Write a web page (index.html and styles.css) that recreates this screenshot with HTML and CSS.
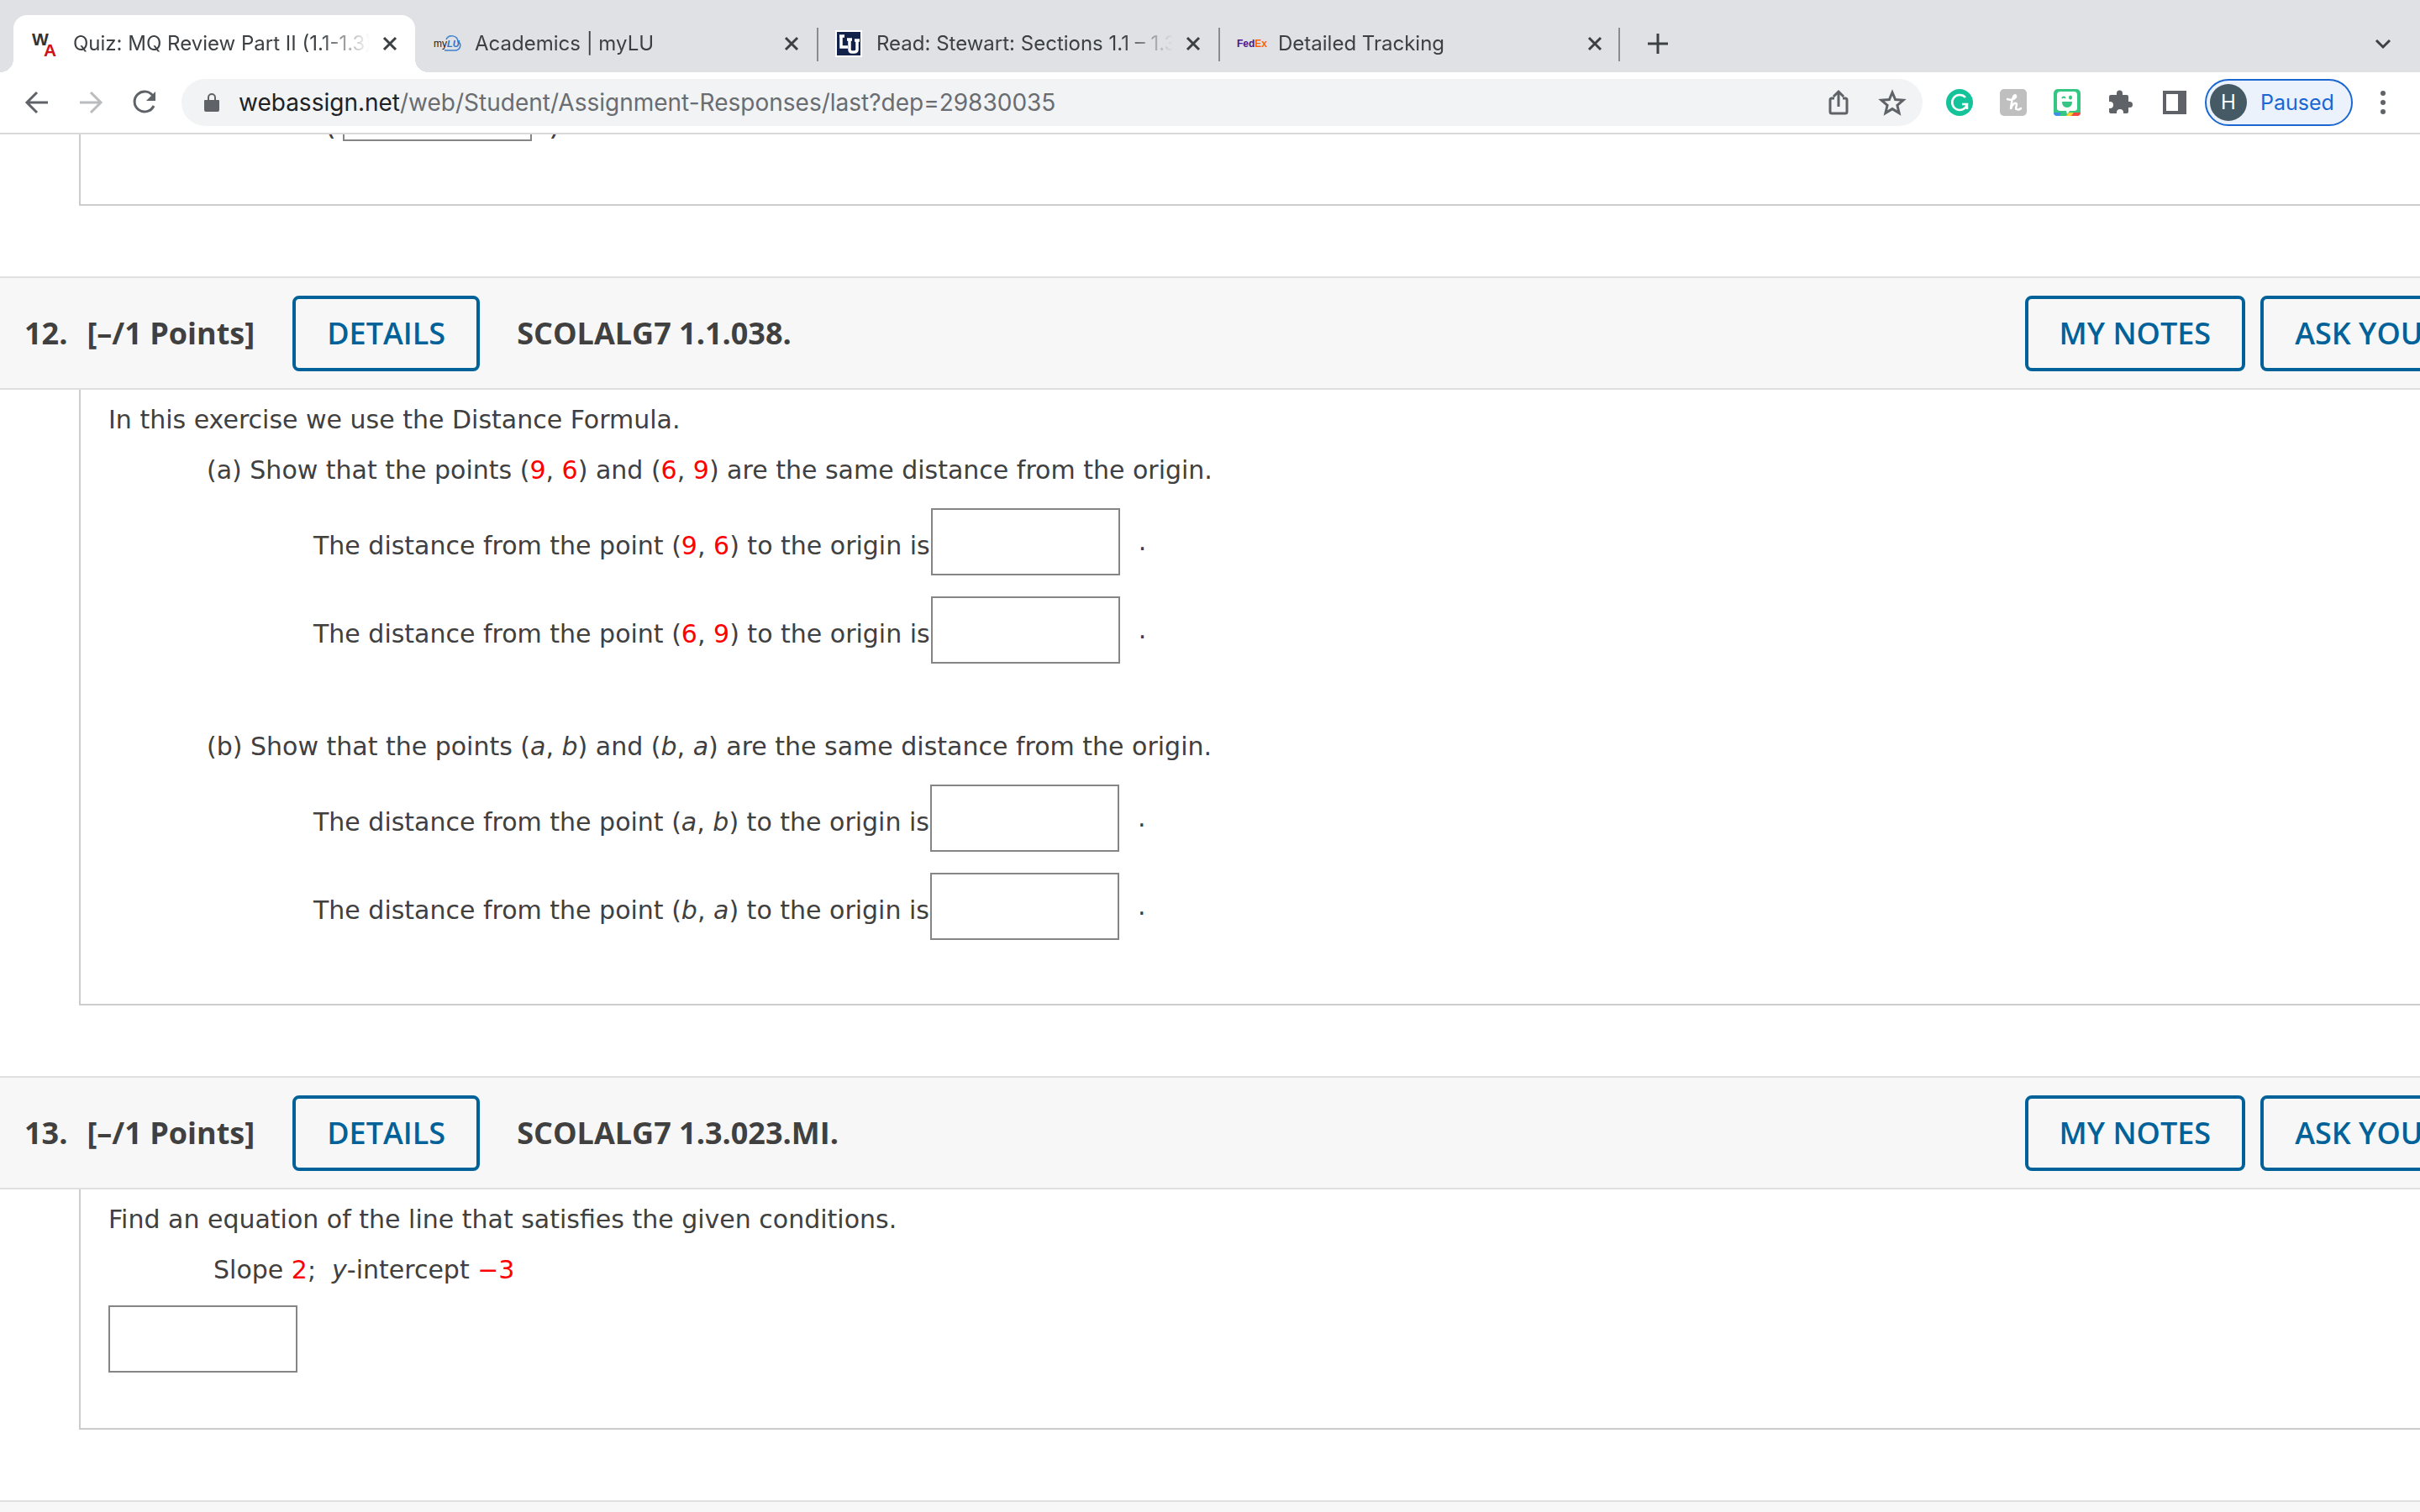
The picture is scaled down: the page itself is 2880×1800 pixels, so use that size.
FILE: index.html
```html
<!DOCTYPE html>
<html lang="en">
<head>
<meta charset="utf-8">
<title>Quiz: MQ Review Part II</title>
<link rel="stylesheet" href="styles.css">
</head>
<body>
<header class="browser">
  <nav class="tabs" aria-label="Open tabs">
    <div class="tab tab-active">
      <svg class="favicon" viewBox="0 0 32 32" aria-hidden="true"><text x="0" y="18" class="wa wa-w">W</text><text x="14" y="31" class="wa wa-a">A</text></svg>
      <span class="tab-title">Quiz: MQ Review Part II (1.1-1.3)</span>
      <button class="close" aria-label="Close tab"><svg viewBox="0 0 20 20"><path d="M3 3l14 14M17 3L3 17"/></svg></button>
    </div>
    <div class="tab">
      <svg class="favicon" viewBox="0 0 32 32" aria-hidden="true"><path d="M13 24h14c6-2 6-9 2-10 0-8-11-10-14-3" fill="none" stroke="#3f7fd0" stroke-width="1.5"/><text x="0" y="20" class="my">my</text><text x="16" y="20" class="my-lu">LU</text></svg>
      <span class="tab-title">Academics | myLU</span>
      <button class="close" aria-label="Close tab"><svg viewBox="0 0 20 20"><path d="M3 3l14 14M17 3L3 17"/></svg></button>
    </div>
    <div class="tab tab-ruled">
      <svg class="favicon" viewBox="0 0 32 32" aria-hidden="true"><path d="M0 0h32v32H0z" fill="#fff"/><path d="M2 2h28v28H2z" fill="#12224a"/><path d="M7 7v13h8M5 7h6M14 11h6M17 11v12q0 3 3 3h2q4 0 4-3V13M23 12h6" fill="none" stroke="#fff" stroke-width="3.5"/></svg>
      <span class="tab-title">Read: Stewart: Sections 1.1 – 1.3</span>
      <button class="close" aria-label="Close tab"><svg viewBox="0 0 20 20"><path d="M3 3l14 14M17 3L3 17"/></svg></button>
    </div>
    <div class="tab tab-ruled tab-last">
      <svg class="favicon" viewBox="0 0 32 32" aria-hidden="true"><text x="0" y="20" class="fedex">Fed<tspan fill="#ff6200">Ex</tspan></text></svg>
      <span class="tab-title">Detailed Tracking</span>
      <button class="close" aria-label="Close tab"><svg viewBox="0 0 20 20"><path d="M3 3l14 14M17 3L3 17"/></svg></button>
    </div>
    <button class="new-tab" aria-label="New tab"><svg viewBox="0 0 28 28"><path d="M14 2v24M2 14h24"/></svg></button>
    <button class="tab-search" aria-label="Search tabs"><svg viewBox="0 0 20 20"><path d="M2 6l8 8 8-8"/></svg></button>
  </nav>
  <div class="toolbar">
    <button class="nav-btn" aria-label="Back"><svg viewBox="0 0 32 32"><path d="M29 16H5M16 4L4 16l12 12"/></svg></button>
    <button class="nav-btn nav-off" aria-label="Forward"><svg viewBox="0 0 32 32"><path d="M3 16h24M16 4l12 12-12 12"/></svg></button>
    <button class="nav-btn" aria-label="Reload"><svg viewBox="0 0 32 32"><path d="M26.500 9A12 12 0 1 0 27 20"/><path d="M29 3v11H18z" fill="#5f6368" stroke="none"/></svg></button>
    <div class="omnibox">
      <svg class="lock" viewBox="0 0 20 24" aria-hidden="true"><path d="M2 9h16q1 0 1 1v11q0 2-2 2H3q-2 0-2-2V10q0-1 1-1z" fill="#5f6368"/><path d="M6 10V6a4 4 0 0 1 8 0v4" fill="none" stroke="#5f6368" stroke-width="2"/></svg>
      <a class="url" href="#q12"><span class="host">webassign.net</span>/web/Student/Assignment-Responses/last?dep=29830035</a>
      <button class="omni-btn" aria-label="Share"><svg viewBox="0 0 32 32"><path d="M11 11H8q-2 0-2 2v14q0 2 2 2h16q2 0 2-2V13q0-2-2-2h-3M16 21V4M10 9l6-6 6 6"/></svg></button>
      <button class="omni-btn" aria-label="Bookmark"><svg viewBox="0 0 32 32"><path d="M16 4l3.600 8.500 9.400.800-7.100 6.100 2.200 9.100-8.100-4.900-8.100 4.900 2.200-9.100L3 13.300l9.400-.800z"/></svg></button>
    </div>
    <div class="extensions">
      <button class="ext" aria-label="Grammarly"><svg viewBox="0 0 32 32"><circle cx="16" cy="16" r="16" fill="#15c39a"/><path d="M23 10a9 9 0 1 0 2 8h-6M25 18v6" fill="none" stroke="#fff" stroke-width="2.500"/></svg></button>
      <button class="ext" aria-label="Honey"><svg viewBox="0 0 32 32"><rect width="32" height="32" rx="5" fill="#bfbfbf"/><path d="M9 12c5 2 11-1 10-4-2-3-5 4-6 16 1-6 6-9 7-6 0 3-2 6 0 6 2 1 4 0 5-1" fill="none" stroke="#fff" stroke-width="2.500" stroke-linecap="round"/></svg></button>
      <button class="ext" aria-label="Bitmoji"><svg viewBox="0 0 32 32"><rect width="32" height="32" rx="5" fill="#35c684"/><path d="M0 28h9l-2 4H4q-4 0-4-4z" fill="#3f8fe8"/><path d="M18 28h6l-3 4h-6z" fill="#ffd22e"/><path d="M24 28h8q0 4-4 4h-7z" fill="#f4483d"/><path d="M8 3h16q4 0 4 4v16q0 3-4 3h-5l-3 4-1-4H8q-4 0-4-3V7q0-4 4-4z" fill="#fff"/><path d="M10 15h12q0 7-6 7t-6-7z" fill="#35c684"/><ellipse cx="20" cy="10" rx="2" ry="2.500" fill="#35c684"/><path d="M10 11q2-3 4 0" fill="none" stroke="#35c684" stroke-width="2"/></svg></button>
      <button class="ext" aria-label="Extensions"><svg viewBox="0 0 32 32"><path d="M4 7h7V5a3.500 3.500 0 0 1 7 0v2h5q2 0 2 2v6h1.500a3.500 3.500 0 0 1 0 7H25v5q0 2-2 2h-4v-1a4 4 0 0 0-8 0v1H4q-2 0-2-2v-4h1a4 4 0 0 0 0-8H2V9q0-2 2-2z" fill="#5f6368"/></svg></button>
      <button class="ext" aria-label="Side panel"><svg viewBox="0 0 32 32"><path d="M4 4h24v24H4z" fill="#fff" stroke="#5f6368" stroke-width="4"/><path d="M20 4h8v24h-8z" fill="#5f6368"/></svg></button>
    </div>
    <button class="profile"><span class="avatar">H</span>Paused</button>
    <button class="menu" aria-label="Menu"><svg viewBox="0 0 8 32"><circle cx="4" cy="5" r="3"/><circle cx="4" cy="16" r="3"/><circle cx="4" cy="27" r="3"/></svg></button>
  </div>
</header>

<main class="page">
  <section class="question-body body-scrolled">
    <div class="answer-row"><span class="big-paren">(</span><input class="answer" type="text" aria-label="Answer 11"><span class="big-paren">)</span></div>
  </section>

  <section class="question" id="q12">
    <header class="question-head">
      <span class="number">12.</span>
      <span class="points">[–/1 Points]</span>
      <button class="action">DETAILS</button>
      <h2 class="code">SCOLALG7 1.1.038.</h2>
      <button class="action">MY NOTES</button>
      <button class="action">ASK YOUR TEACHER</button>
    </header>
    <div class="question-body">
      <p class="line">In this exercise we use the Distance Formula.</p>
      <div class="part">
        <p class="line">(a) Show that the points (<b>9</b>, <b>6</b>) and (<b>6</b>, <b>9</b>) are the same distance from the origin.</p>
        <div class="answer-row"><label for="a1">The distance from the point (<b>9</b>, <b>6</b>) to the origin is</label><input class="answer" id="a1" type="text"><span class="stop">.</span></div>
        <div class="answer-row"><label for="a2">The distance from the point (<b>6</b>, <b>9</b>) to the origin is</label><input class="answer" id="a2" type="text"><span class="stop">.</span></div>
      </div>
      <div class="part">
        <p class="line">(b) Show that the points (<i>a</i>, <i>b</i>) and (<i>b</i>, <i>a</i>) are the same distance from the origin.</p>
        <div class="answer-row"><label for="b1">The distance from the point (<i>a</i>, <i>b</i>) to the origin is</label><input class="answer" id="b1" type="text"><span class="stop">.</span></div>
        <div class="answer-row"><label for="b2">The distance from the point (<i>b</i>, <i>a</i>) to the origin is</label><input class="answer" id="b2" type="text"><span class="stop">.</span></div>
      </div>
    </div>
  </section>

  <section class="question">
    <header class="question-head">
      <span class="number">13.</span>
      <span class="points">[–/1 Points]</span>
      <button class="action">DETAILS</button>
      <h2 class="code">SCOLALG7 1.3.023.MI.</h2>
      <button class="action">MY NOTES</button>
      <button class="action">ASK YOUR TEACHER</button>
    </header>
    <div class="question-body body-short">
      <p class="line">Find an equation of the line that satisfies the given conditions.</p>
      <p class="line given">Slope <b>2</b>;&nbsp; <i>y</i>-intercept <b>−3</b></p>
      <input class="answer" type="text" aria-label="Equation of the line">
    </div>
  </section>

  <section class="question">
    <header class="question-head"></header>
  </section>
</main>
</body>
</html>
```
FILE: styles.css
```css
* { box-sizing: border-box; }

html, body { height: 100%; }

body {
  margin: 0;
  display: flex;
  flex-direction: column;
  overflow: hidden;
  background: #fff;
  color: #404040;
  font: 30px/40px Verdana, "DejaVu Sans", sans-serif;
}

button {
  margin: 0;
  padding: 0;
  border: 0;
  background: none;
  font: inherit;
  color: inherit;
}

svg { display: block; overflow: visible; }
p, h2 { margin: 0; }

/* Browser window */
.browser {
  flex: none;
  font-family: Inter, sans-serif;
  border-bottom: 2px solid #dadada;
}

.tabs {
  display: flex;
  height: 86px;
  padding: 18px 34px 0 16px;
  background: #dfe1e5;
  color: #3c4043;
}

.tab {
  display: flex;
  align-items: center;
  width: 478px;
  padding: 0 20px 0 22px;
  font-size: 24px;
}

.tab-active {
  position: relative;
  border-radius: 16px 16px 0 0;
  background: #fff;
}

.tab-active::before,
.tab-active::after {
  content: "";
  position: absolute;
  bottom: 0;
  width: 16px;
  height: 16px;
}

.tab-active::before {
  right: 100%;
  background: radial-gradient(circle at 0 0, #dfe1e5 16px, #fff 16px);
}

.tab-active::after {
  left: 100%;
  background: radial-gradient(circle at 100% 0, #dfe1e5 16px, #fff 16px);
}

.tab-ruled {
  background: linear-gradient(#888c91, #888c91) left 0 top 15px / 2px 40px no-repeat;
}

.tab-last {
  background:
    linear-gradient(#888c91, #888c91) left 0 top 15px / 2px 40px no-repeat,
    linear-gradient(#888c91, #888c91) right 0 top 15px / 2px 40px no-repeat;
}

.favicon { flex: none; width: 32px; height: 32px; }
.wa { font: bold 21px "Liberation Sans", sans-serif; }
.wa-w { fill: #333; }
.wa-a { fill: #d01018; }
.my { font: 12px "Liberation Sans", sans-serif; fill: #222; }
.my-lu { font: italic bold 11px "Liberation Sans", sans-serif; fill: #2f6fc4; }
.fedex { font: bold 12px "Liberation Sans", sans-serif; fill: #4d148c; }

.tab-title {
  flex: 1;
  min-width: 0;
  margin: 0 14px 0 17px;
  overflow: hidden;
  white-space: nowrap;
  mask-image: linear-gradient(to right, #000 calc(100% - 60px), transparent);
}

.close, .new-tab, .tab-search {
  flex: none;
  fill: none;
  stroke: #3c4043;
  stroke-width: 3;
}

.close svg, .tab-search svg { width: 20px; height: 20px; }
.new-tab { margin-left: 31px; }
.new-tab svg { width: 28px; height: 28px; }
.tab-search { margin-left: auto; }

.toolbar {
  display: flex;
  align-items: center;
  height: 72px;
  padding: 0 40px 0 28px;
  background: #fff;
}

.nav-btn {
  margin-right: 32px;
  fill: none;
  stroke: #5f6368;
  stroke-width: 3;
}

.nav-btn:nth-child(3) { margin-right: 28px; }
.nav-btn svg { width: 32px; height: 32px; }
.nav-off { stroke: #babcbe; }

.omnibox {
  flex: 1;
  display: flex;
  align-items: center;
  height: 56px;
  margin-right: 28px;
  padding: 0 20px 0 26px;
  border-radius: 28px;
  background: #f1f3f4;
  font-size: 28px;
}

.lock { width: 20px; height: 24px; }

.url {
  flex: 1;
  margin-left: 22px;
  color: #696c70;
  text-decoration: none;
}

.host { color: #202124; }

.omni-btn {
  margin-left: 32px;
  fill: none;
  stroke: #5f6368;
  stroke-width: 3;
}

.omni-btn svg, .ext svg { width: 32px; height: 32px; }

.extensions { display: flex; gap: 32px; }

.profile {
  display: flex;
  align-items: center;
  gap: 16px;
  width: 176px;
  height: 56px;
  margin: 0 32px 0 20px;
  padding-left: 4px;
  border: 2px solid #1a67d2;
  border-radius: 28px;
  background: #ebf2fb;
  color: #1a67d2;
  font-size: 25px;
}

.avatar {
  width: 44px;
  height: 44px;
  border-radius: 50%;
  background: #455a64;
  color: #fff;
  font-size: 24px;
  line-height: 44px;
  text-align: center;
}

.menu { fill: #5f6368; }
.menu svg { width: 8px; height: 32px; }

/* Assignment */
.page {
  flex: 1;
  min-height: 0;
  overflow: hidden;
}

.question { margin-top: 84px; }

.question-head {
  display: flex;
  align-items: center;
  min-height: 135px;
  padding: 0 0 0 29px;
  border: 2px solid #e0e0e0;
  border-width: 2px 0;
  background: #f7f7f7;
  font: 36px/48px "Open Sans", sans-serif;
  font-weight: 700;
  white-space: nowrap;
}

.number { margin-right: 23px; }
.points { margin-right: 45px; }

.code {
  flex: 1;
  margin-left: 44px;
  font: inherit;
}

.action {
  flex: none;
  height: 90px;
  padding: 0 37px;
  border: 4px solid #006298;
  border-radius: 8px;
  color: #006298;
  font-weight: 600;
}

.action + .action { margin-left: 18px; }
.action:last-child { margin-right: -234px; }

.question-body {
  margin-left: 94px;
  padding: 16px 0 76px 33px;
  border: 2px solid #ccc;
  border-width: 0 0 2px 2px;
}

.body-short { padding-bottom: 66px; }

.body-scrolled { padding: 0 0 75px 290px; }
.body-scrolled .answer-row { margin: -72px 0 0; }
.body-scrolled .answer { margin: 0; }
.big-paren { align-self: flex-end; width: 22px; font-size: 36px; }
.body-scrolled .answer + .big-paren { margin-left: 20px; }

.part { margin: 20px 0 79px 117px; }
.part:last-child { margin-bottom: 0; }

.answer-row {
  display: flex;
  align-items: center;
  margin: 25px 0 0 127px;
}

.answer-row label { padding-top: 10px; }

.answer {
  width: 225px;
  height: 80px;
  margin: 0 0 0 1px;
  padding: 0 12px;
  border: 2px solid #858585;
  border-radius: 0;
  background: #fff;
  font: inherit;
}

.stop { margin-left: 22px; }

.given { margin: 20px 0 22px 125px; }
.given + .answer { display: block; margin-left: 0; }

b { font-weight: 400; color: #f00; }
```
